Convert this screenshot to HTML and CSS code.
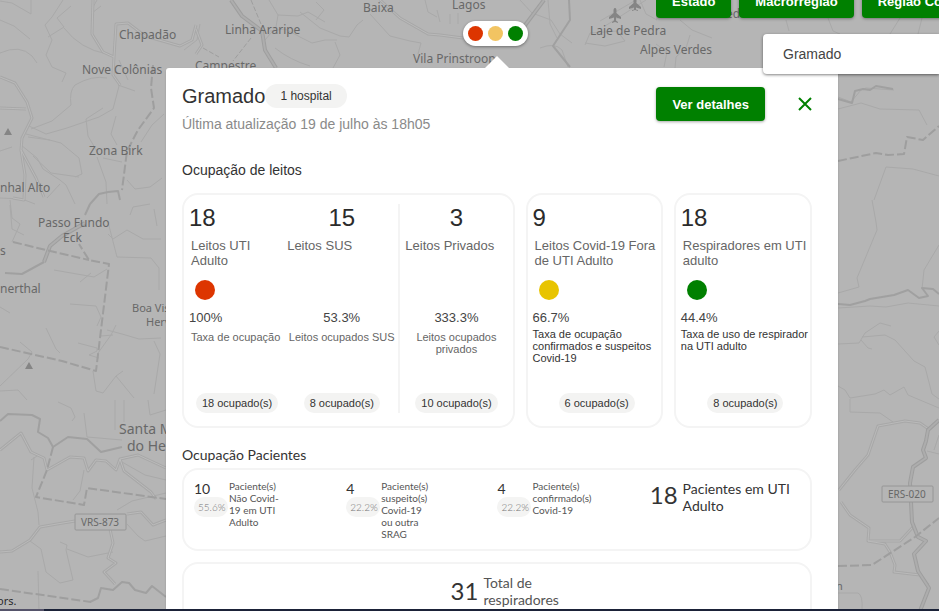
FILE: index.html
```html
<!DOCTYPE html>
<html lang="pt-BR">
<head>
<meta charset="utf-8">
<meta name="viewport" content="width=device-width, initial-scale=1">
<title>Ocupação de leitos</title>
<link rel="stylesheet" href="styles.css">
</head>
<body>
<svg class="map" viewBox="0 0 939 611" preserveAspectRatio="xMinYMin slice" aria-hidden="true">
  <g class="minor">
    <path d="M0 53Q20 44 32 56L37 63M0 1L12 3 31 14V0M0 20L14 26 30 39M63 0L52 17 45 25 52 40 46 55 52 67 66 73 62 82M71 6L57 18 64 27 48 37M64 28Q80 49 107 54M107 78Q92 75 75 85 69 91 71 105L52 121 31 129M119 86L113 109 99 117 67 128 46 134 29 126M118 85L135 91M119 60L128 80M103 108L86 119 88 136 99 155M116 116L111 134 117 145M26 134L61 143 79 158 82 174 75 177M28 137L50 140M33 156L51 173 79 177M21 145L37 158 43 169 60 180 66 185 75 204M97 157L106 182 107 204M103 158L122 162M164 114L152 125 141 142M127 180L135 189 150 187 162 178M92 13L101 6M200 24L197 40 184 50M0 151L12 147M0 198L22 199 35 204M60 184L47 198"/>
    <path d="M269 0L278 15 298 16 308 12 325 22M316 2L324 10 316 20M278 15L276 27 265 40M270 31L285 29 300 37 312 43 325 40 337 40M300 12L320 28 340 36 349 37 357 25 363 20M335 42L340 55 333 68M275 48Q290 60 310 66M370 14L390 36 410 41 421 43 418 54M425 0L428 12 437 17M437 10L440 22M450 14V24M458 13V24M520 0L532 13 551 20 560 34 572 43M548 0L550 24 557 38M540 48Q555 42 562 50L568 67M585 45L590 33 617 31 625 41 605 46 585 43M600 21L636 0M605 26L646 0M640 0L646 14 657 20M690 35L686 48 676 57 675 68M656 44L667 52 664 67M680 20L692 30 712 38M786 20L789 31M828 18L833 31 840 34M922 18L918 34M900 18L890 34"/>
    <path d="M838 97L851 102 861 90 866 88 894 90M838 109L861 103 880 109 919 110 927 125M886 167L913 169 939 176M886 167L874 200M872 200L876 222 877 230 857 278 859 287 838 293M939 245L924 270 922 289M838 308L870 306 886 307 908 303 939 306M838 344L859 343 865 333 880 323 891 326M861 340L868 348 872 349M862 337L885 335 895 340 914 361 925 367 932 394 939 399M838 386L845 390 850 398 875 394 884 390 890 395 904 387 908 395 939 408M850 399V412L880 413 893 422M838 593H858Q863 595 862 610M939 331L934 337 939 345M927 451L939 454M939 435L934 450"/>
    <path d="M10 200L12 218 20 224 12 242M24 235L12 229 10 205M150 204L133 207 130 215M154 209L157 226M108 234L113 239 127 230 143 239 161 239M108 222L117 257 151 258 159 268 159 290M54 270L94 277 107 269M80 282L91 273M70 304L96 306 101 317 97 326M78 343L97 348 97 351 89 355 99 358M46 328L56 349 60 353M101 336L113 335M107 330L122 334 139 339 161 338M98 353L111 335 116 325M20 342L32 352 28 359 0 386M93 371L96 391 103 393 116 376 134 398M116 376L123 371M154 341L160 354 154 394M0 307L10 313M0 391L18 390 27 400M58 402L71 408 75 417 72 421M115 400V430M124 400V422M84 413L87 437 122 440M97 0L92 9"/>
    <path d="M148 400L150 415 166 410M84 470L80 491 73 500M31 460L37 456M34 457L32 488 38 512 39 525M30 541L41 549 46 572 60 583 73 580 66 550 67 545 60 542M67 549L88 557 113 552M38 571L39 611M127 524L138 536 145 541 166 536M117 510L132 501 166 493M122 462L145 475 166 480"/>
  </g>
  <g class="casing"><path id="lanes" d="M0 77L15 83 27 102 32 118 22 138 21 150 25 175 24 200 13 198M93 0L92 34 103 52 114 57 116 24 128 23 145 36 180 46 192 40 196 25M114 57L113 75 120 85M0 108L26 109M21 150L36 178 44 197M196 29L202 45 196 54M0 450L21 433 31 452 44 458 47 470M47 470L70 457 84 458 88 471 96 460 106 461 116 470 120 459 138 455 166 468M120 459L124 471 151 492 156 499M0 552L12 551 30 540 40 527 57 524 75 521M110 529L113 543 108 558 116 563 104 572 115 584M127 514L141 512 153 525 166 520M380 0L400 18 428 34 440 35 463 38M839 490L855 470 868 455 878 426 905 421 920 423 930 430M841 502L850 515 869 528 868 541 885 544 890 552 895 565 894 572 920 575 928 585M868 541L900 541 913 527"/></g>
  <use href="#lanes" class="lane"/>
  <g class="road"><path id="highways" d="M231 0L242 16 262 31 265 50 276 68M544 0L526 24 520 33M939 420L928 430 926 441 923 450 926 458 913 467 910 483 912 522 918 537 926 541 914 554 918 571 929 588 920 611M44 262L50 246 62 236 85 223"/></g>
  <use href="#highways" class="highway"/>
  <g class="river">
    <path d="M5 273L22 274 44 262M90 204L99 194 108 192 118 191 120 200M90 204L85 215M0 421L8 414 32 415 40 419 38 432 48 438 53 447 68 437 87 439 101 452 122 447M90 602L98 598 101 588 113 590 122 582 129 583 135 590 146 593 152 586 166 597M569 0L570 20 553 46 570 67M838 99L852 103 855 91 863 89 870 90 876 86 893 89M838 304L850 305 865 301 870 299 894 295 908 290 919 298 928 296 922 288 933 289 939 294"/>
  </g>
  <g class="border">
    <path d="M153 65L151 88 154 108 138 130 127 151 122 190M0 347L31 354 62 361 96 371 109 264 89 260 79 244M0 589L91 602M53 447L47 470 36 497 84 505 87 488 166 499M838 161L876 153 888 155 904 154 907 137 923 140 939 126M838 566L872 565 915 537 939 518M13 242L46 250 89 260"/>
    <path class="thin" d="M203 48L219 57M251 38L233 61M251 0L261 24"/>
  </g>
  <g class="glyphs">
    <path d="M4 135L8 128 12 135ZM25 369L29 362 33 369Z"/>
    <path d="M615 8Q613 8 613.600 13L609 17V19L614 17.500 614 20.500 612 22V23L615 22 618 23V22L616 20.500 616 17.500 621 19V17L616.400 13Q617 8 615 8Z"/>
    <path d="M635 -2Q633 -2 633.600 3L629 7V9L634 7.500 634 9.500 632 10V11L635 10 638 11V10L636 9.500 636 7.500 641 9V7L636.400 3Q637 -2 635 -2Z"/>
  </g>
  <g class="shields">
    <rect x="75" y="514" width="51" height="16" rx="1"/>
    <rect x="882" y="486" width="51" height="16" rx="1"/>
  </g>
  <g class="places">
    <text x="119" y="39">Chapadão</text>
    <text x="225" y="34">Linha Araripe</text>
    <text x="363" y="12">Baixa</text>
    <text x="452" y="9">Lagos</text>
    <text x="82" y="74">Nove Colônias</text>
    <text x="195" y="70">Campestre</text>
    <text x="413" y="63">Vila Prinstroop</text>
    <text x="590" y="35">Laje de Pedra</text>
    <text x="640" y="54">Alpes Verdes</text>
    <text x="726" y="18">ed</text>
    <text x="89" y="155">Zona Birk</text>
    <text x="0" y="192">nhal Alto</text>
    <text x="38" y="227">Passo Fundo</text>
    <text x="63" y="242">Eck</text>
    <text x="0" y="255">s</text>
    <text x="0" y="293">nerthal</text>
    <text x="132" y="312" class="small">Boa Vis</text>
    <text x="146" y="326" class="small">Herv</text>
    <text x="836" y="590" class="small">n</text>
    <text x="119" y="434" class="town">Santa M</text>
    <text x="127" y="451" class="town">do Her</text>
    <text x="81" y="526" class="code">VRS-873</text>
    <text x="888" y="498" class="code">ERS-020</text>
    <text x="-3" y="605" class="credit">ors.</text>
  </g>
</svg>

<div class="marker" aria-label="Gramado">
  <span class="dot red"></span><span class="dot sand"></span><span class="dot green"></span>
</div>

<main class="stage">
  <article class="popup">
    <header class="head">
      <div>
        <div class="title"><h1>Gramado</h1><span class="count">1 hospital</span></div>
        <p class="updated">Última atualização 19 de julho às 18h05</p>
      </div>
      <div class="actions">
        <button class="btn" type="button">Ver detalhes</button>
        <button class="close" type="button" aria-label="Fechar"><svg viewBox="0 0 14 14" width="14" height="14"><path d="M1 1L13 13M13 1L1 13"/></svg></button>
      </div>
    </header>

    <h2 class="section">Ocupação de leitos</h2>
    <div class="cards">
      <section class="card split">
        <div class="metric first">
          <strong class="num">18</strong>
          <p class="label">Leitos UTI Adulto</p>
          <span class="light red"></span>
          <p class="pct">100%</p>
          <p class="desc">Taxa de ocupação</p>
          <span class="chip">18 ocupado(s)</span>
        </div>
        <div class="metric mid">
          <strong class="num">15</strong>
          <p class="label">Leitos SUS</p>
          <span class="light"></span>
          <p class="pct">53.3%</p>
          <p class="desc">Leitos ocupados SUS</p>
          <span class="chip">8 ocupado(s)</span>
        </div>
        <div class="metric mid last">
          <strong class="num">3</strong>
          <p class="label">Leitos Privados</p>
          <span class="light"></span>
          <p class="pct">333.3%</p>
          <p class="desc">Leitos ocupados privados</p>
          <span class="chip">10 ocupado(s)</span>
        </div>
      </section>
      <section class="card">
        <div class="metric">
          <strong class="num">9</strong>
          <p class="label">Leitos Covid-19 Fora de UTI Adulto</p>
          <span class="light yellow"></span>
          <p class="pct">66.7%</p>
          <p class="desc">Taxa de ocupação confirmados e suspeitos Covid-19</p>
          <span class="chip">6 ocupado(s)</span>
        </div>
      </section>
      <section class="card">
        <div class="metric">
          <strong class="num">18</strong>
          <p class="label">Respiradores em UTI adulto</p>
          <span class="light green"></span>
          <p class="pct">44.4%</p>
          <p class="desc">Taxa de uso de respirador na UTI adulto</p>
          <span class="chip">8 ocupado(s)</span>
        </div>
      </section>
    </div>

    <h2 class="section lato">Ocupação Pacientes</h2>
    <section class="card patients">
      <div class="group"><div class="tally"><b>10</b><span>55.6%</span></div><p>Paciente(s) Não Covid-19 em UTI Adulto</p></div>
      <div class="group"><div class="tally"><b>4</b><span>22.2%</span></div><p>Paciente(s) suspeito(s) Covid-19 ou outra SRAG</p></div>
      <div class="group"><div class="tally"><b>4</b><span>22.2%</span></div><p>Paciente(s) confirmado(s) Covid-19</p></div>
      <div class="total"><strong>18</strong><p>Pacientes em UTI Adulto</p></div>
    </section>
    <section class="card respirators">
      <div class="total soft"><strong>31</strong><p>Total de respiradores</p></div>
    </section>
  </article>
</main>

<div class="filters">
  <nav class="tabs">
    <button class="btn" type="button">Estado</button>
    <button class="btn" type="button">Macrorregião</button>
    <button class="btn" type="button">Região Covid</button>
  </nav>
  <input class="search" type="text" value="Gramado" aria-label="Município">
</div>
<div class="taskbar"></div>
</body>
</html>
```
FILE: styles.css
```css
* { box-sizing: border-box; }
body {
  margin: 0;
  min-height: 100vh;
  position: relative;
  overflow: hidden;
  background: #b5b5b5;
  color: #333;
  font-family: "Liberation Sans", Arial, sans-serif;
}
h1, h2, p { margin: 0; font-weight: 400; }
button, input { font: inherit; border: 0; }

/* Map */
.map { position: absolute; inset: 0; width: 100%; height: 100%; }
.map path { fill: none; stroke-linejoin: round; }
.minor { stroke: #a9a9a9; stroke-width: 1; }
.casing { stroke: #a8a8a8; stroke-width: 3; }
.lane { stroke: #bababa; stroke-width: 1; }
.road { stroke: #9e9e9e; stroke-width: 4; }
.highway { stroke: #adadad; stroke-width: 2; }
.river { stroke: #a0a0a0; stroke-width: 2; }
.border { stroke: #9e9e9e; stroke-width: 2; stroke-dasharray: 9 3; }
.border .thin { stroke-width: 1; stroke-dasharray: 5 2; }
.map .glyphs path { fill: #858585; }
.shields rect { fill: #b5b5b5; stroke: #969696; }
.places { font: 12px "Noto Sans", sans-serif; fill: #686868; }
.places .small { font-size: 11px; }
.places .town { font-size: 14px; }
.places .code { font-size: 10px; }
.places .credit { font-size: 11px; fill: #2b2b2b; }

/* Marker */
.marker {
  position: absolute; left: 463px; top: 21px;
  display: flex; gap: 5px; padding: 5px;
  border-radius: 13px; background: #fff;
  box-shadow: 0 1px 3px rgba(0, 0, 0, .4);
}
.dot { width: 15px; height: 15px; border-radius: 50%; }
.red { background: #dd3500; }
.sand { background: #f2c462; }
.yellow { background: #e8c400; }
.green { background: #008000; }

/* Popup */
.stage { padding: 68px 101px 0 166px; height: 100vh; overflow: hidden; position: relative; pointer-events: none; }
.stage::before {
  content: ""; position: absolute; left: 485px; top: 56px;
  border: solid transparent; border-width: 0 12px 12px;
  border-bottom-color: #fff;
}
.popup {
  padding: 16px 26px 24px 16px;
  background: #fff;
  border-radius: 3px;
  box-shadow: 0 1px 2px rgba(0, 0, 0, .2);
  pointer-events: auto;
}
.head { display: flex; justify-content: space-between; align-items: flex-start; }
.title { display: flex; align-items: center; }
.title h1 { font-size: 20px; line-height: 24px; }
.count { padding: 0 15px; border-radius: 12px; background: #f3f3f2; font-size: 12px; line-height: 24px; }
.updated { margin-top: 7px; font-size: 14px; line-height: 18px; color: #8a8a8a; }
.actions { display: flex; align-items: center; gap: 33px; padding-top: 3px; }
.btn {
  height: 34px; padding: 0 16px; flex: none;
  border-radius: 4px; background: #008000; color: #fff;
  font-size: 13px; font-weight: 700; white-space: nowrap;
  box-shadow: 0 1px 3px rgba(0, 0, 0, .35);
}
.close { padding: 0; background: none; display: flex; }
.close path { stroke: #008000; stroke-width: 2; }
.section { margin: 28px 0 14px; font-size: 14px; line-height: 18px; }
.section.lato { margin: 18px 0 4px; }
.lato, .patients, .respirators { font-family: Lato, sans-serif; }

.cards { display: grid; grid-template-columns: 332fr 137fr 138fr; gap: 11px; }
.card { border: 2px solid #f4f4f4; border-radius: 16px; }
.cards .card { padding: 9px 0 13px; }
.split { display: grid; grid-template-columns: 101fr 113fr 114fr; }
.metric { display: flex; flex-direction: column; align-items: flex-start; padding-left: 5px; }
.num { font-size: 24px; line-height: 28px; font-weight: 400; color: #2b2b2b; }
.label { min-height: 30px; margin: 6px 0 0 2px; font-size: 13px; line-height: 15px; color: #666; }
.light { width: 20px; height: 20px; margin: 12px 0 0 6px; border-radius: 50%; }
.pct { margin-top: 9px; font-size: 13px; line-height: 18px; color: #444; }
.desc { min-height: 66px; padding-top: 1px; font-size: 11px; line-height: 12px; color: #333; }
.chip { align-self: center; padding: 0 6px; border-radius: 10px; background: #f3f3f2; font-size: 11px; line-height: 20px; white-space: nowrap; }
.split .desc { padding-top: 4px; color: #666; }
.first .label { max-width: 70px; }
.first .desc { margin-left: 2px; white-space: nowrap; }
.mid { align-items: center; padding: 0; text-align: center; }
.mid .label { align-self: flex-start; }
.last { border-left: 2px solid #f4f4f4; }
.last .label { margin-left: 5px; }

.patients { display: grid; grid-template-columns: 152fr 151fr 152fr 160fr; padding: 10px 0 9px 10px; margin-bottom: 11px; }
.group { display: flex; align-items: flex-start; gap: 1px; }
.tally { width: 34px; display: flex; flex-direction: column; }
.tally b { font-size: 14px; line-height: 17px; font-weight: 400; }
.tally span { padding-left: 4px; border-radius: 10px; background: #f4f4f3; color: #777; font-size: 10px; font-weight: 300; line-height: 20px; }
.group p { width: 52px; font-size: 10px; line-height: 12px; color: #555; }
.total { display: flex; align-items: flex-start; gap: 5px; }
.total strong { font-size: 24px; line-height: 30px; font-weight: 400; }
.total p { width: 110px; font-size: 14px; line-height: 17px; }
.respirators { display: flex; justify-content: center; padding: 10px 0 24px 20px; }
.soft { align-items: center; }
.soft p { width: 80px; color: #555; }

/* Filters over the map */
.filters { position: absolute; top: -16px; left: 656px; right: 0; display: flex; flex-direction: column; overflow: hidden; padding-bottom: 4px; }
.tabs { display: flex; gap: 8px; margin-bottom: 16px; }
.search {
  height: 40px; margin-left: 107px; padding: 0 20px;
  min-width: 0; border-radius: 4px 0 0 4px; background: #fff; color: #444; font-size: 14px;
  box-shadow: 0 1px 3px rgba(0, 0, 0, .5);
}
.taskbar { position: absolute; left: 0; right: 0; bottom: 0; height: 2px; background: linear-gradient(90deg, #55536a 44px, #1b2238 44px); }
```
